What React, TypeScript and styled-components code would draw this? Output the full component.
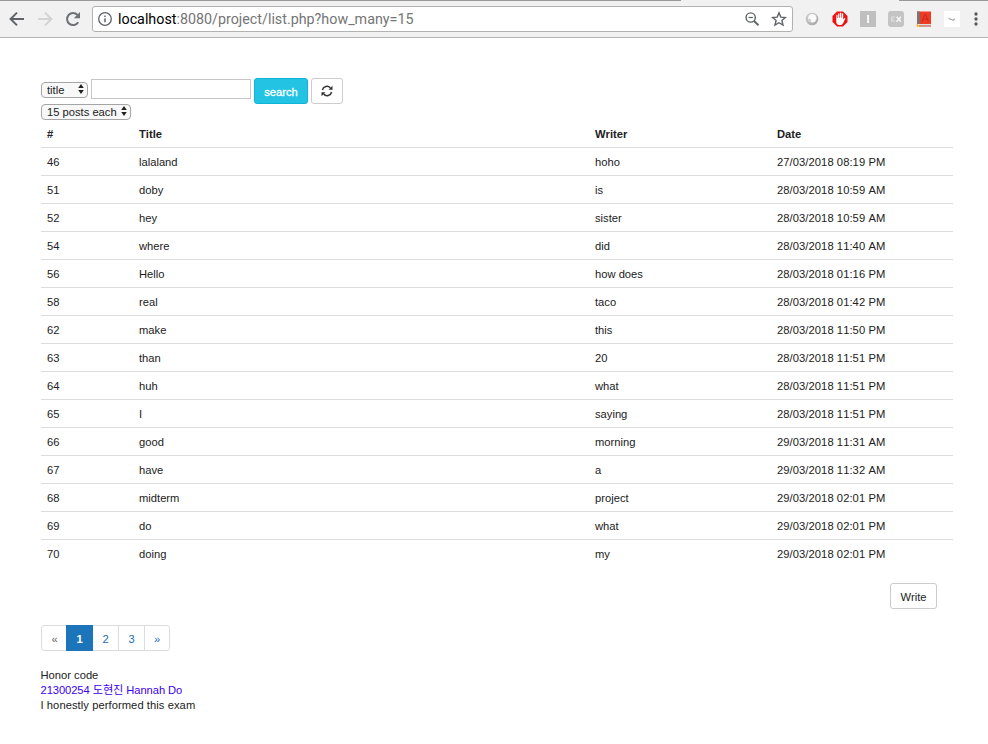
import React from "react";
import styled, { createGlobalStyle } from "styled-components";

const GlobalStyle = createGlobalStyle`
  *, *::before, *::after { box-sizing: border-box; }
  html, body { margin: 0; background: #fff; }
  body {
    color: #212121;
    font: 11.2px/15px "Liberation Sans", "Noto Sans CJK KR", sans-serif;
    font-kerning: none;
  }
  button, input, select { font: inherit; color: inherit; margin: 0; }
`;

const Window = styled.div`
  width: 988px;
  height: 744px;
  overflow: hidden;
`;

const BrowserBar = styled.header`
  display: flex;
  align-items: center;
  height: 38px;
  background: linear-gradient(90deg, #999 681px, transparent 681px, transparent 899px, #999 899px) 0 0 / 100% 1px no-repeat #f1f1f1;
  border-bottom: 1px solid #b4b4b4;
`;

const NavIcons = styled.div`
  display: flex;
  gap: 10px;
  width: 92px;
  padding-left: 8px;
  svg { display: block; }
`;

const AddressBox = styled.div`
  display: flex;
  align-items: center;
  width: 701px;
  height: 26px;
  margin-top: 1px;
  padding: 0 5px 0 4px;
  background: #fff;
  border: 1px solid #b2b2b2;
  border-radius: 3px;
`;

const Url = styled.span`
  flex: 1;
  margin-left: 5px;
  font: 14.3px/22px Roboto, sans-serif;
  font-kerning: auto;
  color: #757575;
  b { font-weight: 400; color: #000; }
`;

const AddressActions = styled.div`
  display: flex;
  gap: 11px;
  svg { display: block; }
`;

const Extensions = styled.div`
  display: flex;
  align-items: center;
  gap: 12px;
  margin-left: 11px;
  svg { display: block; }
`;

const Page = styled.main`
  width: 912px;
  margin: 40px 0 0 41px;
`;

const SearchRow = styled.form`
  display: flex;
  align-items: flex-start;
  gap: 3px;
  height: 26px;
`;

const SelectShell = styled.span<{ $width: number; $height: number; $top?: number }>`
  display: grid;
  align-items: center;
  width: ${(p) => p.$width}px;
  height: ${(p) => p.$height}px;
  margin-top: ${(p) => p.$top ?? 0}px;
  select, svg { grid-area: 1 / 1; }
  svg { justify-self: end; margin: 0 4.5px 2px 0; pointer-events: none; }
`;

const Select = styled.select`
  width: 100%;
  height: 100%;
  padding: 1px 0 0 5px;
  appearance: none;
  line-height: 13px;
  background: #f8f8f8;
  border: 1px solid #a5a5a5;
  border-radius: 4px;
`;

const SearchInput = styled.input`
  width: 160px;
  height: 20px;
  margin-top: 1px;
  padding: 1px 4px;
  background: #fff;
  border: 1px solid #c6c6c6;
`;

const Button = styled.button<{ $width: number; $primary?: boolean }>`
  display: flex;
  align-items: center;
  justify-content: center;
  width: ${(p) => p.$width}px;
  height: 26px;
  padding: 3px 0 0;
  color: ${(p) => (p.$primary ? "#fff" : "#222")};
  background: ${(p) => (p.$primary ? "#23c3e3" : "#fff")};
  border: 1px solid ${(p) => (p.$primary ? "#0fb5d6" : "#ccc")};
  border-radius: 3px;
  -webkit-text-stroke: ${(p) => (p.$primary ? "0.3px #fff" : "0")};
  svg { margin-bottom: 4px; }
`;

const PostTable = styled.table`
  width: 912px;
  table-layout: fixed;
  border-collapse: separate;
  border-spacing: 0;
  th, td {
    height: 28px;
    padding: 0 6px;
    text-align: left;
    line-height: 16px;
    border-bottom: 1px solid #ddd;
  }
  td:last-child { letter-spacing: 0.07px; }
  tbody tr:last-child td { border-bottom-color: transparent; }
`;

const HeadCell = styled.th<{ $share: number }>`
  width: ${(p) => p.$share}%;
`;

const WriteRow = styled.div`
  display: flex;
  justify-content: flex-end;
  margin: 15px 16px 16px 0;
`;

const Pagination = styled.nav`
  display: flex;
  width: 129px;
  height: 26px;
  border: 1px solid #ddd;
  border-radius: 3px;
`;

const PageLink = styled.a<{ $width: number; $state?: "active" | "disabled" }>`
  width: ${(p) => p.$width}px;
  flex: none;
  margin: ${(p) => (p.$state === "active" ? "-1px 0 -1px -1px" : "0")};
  padding-top: ${(p) => (p.$state === "active" ? 6 : 5)}px;
  text-align: center;
  line-height: 16px;
  font-weight: ${(p) => (p.$state === "active" ? 700 : 400)};
  color: ${(p) => (p.$state === "active" ? "#fff" : p.$state === "disabled" ? "#666" : "#1b6db4")};
  background: ${(p) => (p.$state === "active" ? "#1c74bb" : "transparent")};
  border-right: ${(p) => (p.$state ? "0" : "1px solid #ddd")};
  &:last-child { border-right: 0; }
`;

const Honor = styled.footer`
  margin: 17px 0 0 -0.5px;
  white-space: nowrap;
  a { color: #3b00f0; letter-spacing: -0.08px; }
`;

const Pledge = styled.div`
  letter-spacing: 0.06px;
`;

const SelectArrows = () => (
  <svg width="6" height="10" viewBox="0 0 6 10" fill="#222">
    <path d="M3 0 5.8 4H.2zM3 10 .2 6h5.6z" />
  </svg>
);

const posts = [
  ["46", "lalaland", "hoho", "27/03/2018 08:19 PM"],
  ["51", "doby", "is", "28/03/2018 10:59 AM"],
  ["52", "hey", "sister", "28/03/2018 10:59 AM"],
  ["54", "where", "did", "28/03/2018 11:40 AM"],
  ["56", "Hello", "how does", "28/03/2018 01:16 PM"],
  ["58", "real", "taco", "28/03/2018 01:42 PM"],
  ["62", "make", "this", "28/03/2018 11:50 PM"],
  ["63", "than", "20", "28/03/2018 11:51 PM"],
  ["64", "huh", "what", "28/03/2018 11:51 PM"],
  ["65", "I", "saying", "28/03/2018 11:51 PM"],
  ["66", "good", "morning", "29/03/2018 11:31 AM"],
  ["67", "have", "a", "29/03/2018 11:32 AM"],
  ["68", "midterm", "project", "29/03/2018 02:01 PM"],
  ["69", "do", "what", "29/03/2018 02:01 PM"],
  ["70", "doing", "my", "29/03/2018 02:01 PM"],
];

const Toolbar = () => (
  <BrowserBar>
    <NavIcons>
      <svg width="18" height="18" viewBox="0 0 18 18" fill="none" stroke="#5f6368" strokeWidth="2">
        <path d="M16 9H3M9 2.6 2.6 9 9 15.4" />
      </svg>
      <svg width="18" height="18" viewBox="0 0 18 18" fill="none" stroke="#d3d4d6" strokeWidth="2">
        <path d="M2 9h13M9 2.6 15.4 9 9 15.4" />
      </svg>
      <svg width="18" height="18" viewBox="0 0 18 18">
        <path d="M14.2 12.2A6 6 0 1 1 13.5 5" fill="none" stroke="#6e7175" strokeWidth="2" />
        <path d="M16 2v6.2H9.8z" fill="#6e7175" />
      </svg>
    </NavIcons>
    <AddressBox>
      <svg width="16" height="16" viewBox="0 0 16 16" fill="none" stroke="#5f6368">
        <circle cx="8" cy="8" r="6.3" strokeWidth="1.3" />
        <path d="M8 7.2v4M8 4.4v1.5" strokeWidth="1.5" />
      </svg>
      <Url><b>localhost</b>:8080/project/list.php?how_many=15</Url>
      <AddressActions>
        <svg width="16" height="16" viewBox="0 0 16 16" fill="none" stroke="#5f6368">
          <circle cx="6.7" cy="6.5" r="4.6" strokeWidth="1.4" />
          <path d="m10 10 4.5 4.2" strokeWidth="1.9" />
          <path d="M4.5 6.5h4.4" strokeWidth="1.2" />
        </svg>
        <svg width="16" height="16" viewBox="0 0 16 16" fill="none" stroke="#5f6368" strokeWidth="1.4">
          <path d="m8 1.8 1.8 4.3 4.6.4-3.5 3 1.1 4.6L8 11.7l-4 2.4 1.1-4.6-3.5-3 4.6-.4z" />
        </svg>
      </AddressActions>
    </AddressBox>
    <Extensions>
      <svg width="16" height="16" viewBox="0 0 16 16">
        <defs>
          <linearGradient id="rim" x1="0" y1="0" x2="1" y2="1">
            <stop offset="0" stopColor="#d2d2d2" />
            <stop offset="1" stopColor="#a2a2a2" />
          </linearGradient>
        </defs>
        <circle cx="8" cy="8" r="6.3" fill="url(#rim)" />
        <circle cx="8.3" cy="7.3" r="4.2" fill="#fafafa" />
        <circle cx="5.6" cy="9.4" r="1.6" fill="#d0d0d0" />
      </svg>
      <svg width="16" height="16" viewBox="0 0 16 16">
        <path d="M5 .5h6L15.5 5v6L11 15.5H5L.5 11V5z" fill="#ed1111" />
        <path d="M4.3 4.4c0-.8 1.2-.8 1.2 0V7h.6V2.8c0-.9 1.3-.9 1.3 0V6.7H8V2.2c0-.9 1.3-.9 1.3 0v4.5h.6V3c0-.9 1.3-.9 1.3 0v5.5l1-1.3c.5-.5 1.3 0 1 .6l-2 4.3c-.6 1.3-1.3 1.8-2.7 1.8H7.3c-1.8 0-3-1-3-3z" fill="#fff" />
      </svg>
      <svg width="16" height="16" viewBox="0 0 16 16">
        <path d="M0 0h16v16H0z" fill="#bfbfbf" />
        <path d="M7.2 4h1.7v8H7.2z" fill="#fff" />
      </svg>
      <svg width="16" height="16" viewBox="0 0 16 16">
        <rect width="16" height="16" rx="3" fill="#c4c4c4" />
        <path d="M3 6h4M3 8h3M3 10h4M3.5 5.5v5" stroke="#dedede" strokeWidth="1.2" />
        <path d="m8.7 5.7 4.2 5M13 5.7l-4.5 5" stroke="#f5f5f5" strokeWidth="1.6" />
      </svg>
      <svg width="16" height="16" viewBox="0 0 16 16">
        <path d="M1 .5h14V13H1z" fill="#f03b24" />
        <path d="M1 .5h2.8V13H1z" fill="#767676" />
        <path d="M3 13h12v1.5H3z" fill="#ddd" />
        <path d="M3 14.5h12v1H3z" fill="#bd3927" />
        <path d="m6 10.5 2.8-7h.8l2.8 7M7.2 8.2h4" fill="none" stroke="#cc2c1d" strokeWidth="1.1" />
        <path d="M.6 12.5 4.5 15.3.8 16z" fill="#f3b51b" />
      </svg>
      <svg width="16" height="16" viewBox="0 0 16 16">
        <path d="M0 0h16v16H0z" fill="#fff" />
        <path d="m4.5 7 2 1.5h1L9 9.3l2-1.5" fill="none" stroke="#aaa" strokeWidth="1.2" />
      </svg>
      <svg width="8" height="16" viewBox="0 0 8 16" fill="#55585d">
        <circle cx="4" cy="3" r="1.65" />
        <circle cx="4" cy="8" r="1.65" />
        <circle cx="4" cy="13" r="1.65" />
      </svg>
    </Extensions>
  </BrowserBar>
);

export default function App() {
  return (
    <Window>
      <GlobalStyle />
      <Toolbar />
      <Page>
        <SearchRow onSubmit={(e) => e.preventDefault()}>
          <SelectShell $width={47} $height={15} $top={4}>
            <Select aria-label="Search field"><option>title</option></Select>
            <SelectArrows />
          </SelectShell>
          <SearchInput aria-label="Search text" />
          <Button type="submit" $width={54} $primary>search</Button>
          <Button type="button" $width={32} aria-label="Refresh">
            <svg width="12" height="12" viewBox="0 0 12 12">
              <path d="M1.4 5A4.6 4.6 0 0 1 9.4 3M10.6 7A4.6 4.6 0 0 1 2.6 9" fill="none" stroke="#333" strokeWidth="1.5" />
              <path d="M11.5.8v4H7.6zM.5 11.2v-4h3.9z" fill="#333" />
            </svg>
          </Button>
        </SearchRow>
        <SelectShell $width={90} $height={16}>
          <Select aria-label="Posts per page"><option>15 posts each</option></Select>
          <SelectArrows />
        </SelectShell>
        <PostTable>
          <thead>
            <tr>
              <HeadCell $share={10.088}>#</HeadCell>
              <HeadCell $share={50}>Title</HeadCell>
              <HeadCell $share={19.956}>Writer</HeadCell>
              <HeadCell $share={19.956}>Date</HeadCell>
            </tr>
          </thead>
          <tbody>
            {posts.map((post) => (
              <tr key={post[0]}>
                {post.map((value, i) => <td key={i}>{value}</td>)}
              </tr>
            ))}
          </tbody>
        </PostTable>
        <WriteRow><Button type="button" $width={47}>Write</Button></WriteRow>
        <Pagination>
          <PageLink $width={25} $state="disabled">«</PageLink>
          <PageLink $width={27} $state="active">1</PageLink>
          <PageLink $width={26}>2</PageLink>
          <PageLink $width={26}>3</PageLink>
          <PageLink $width={24}>»</PageLink>
        </Pagination>
        <Honor>
          <div>Honor code</div>
          <div><a>21300254 도현진 Hannah Do</a></div>
          <Pledge>I honestly performed this exam</Pledge>
        </Honor>
      </Page>
    </Window>
  );
}
